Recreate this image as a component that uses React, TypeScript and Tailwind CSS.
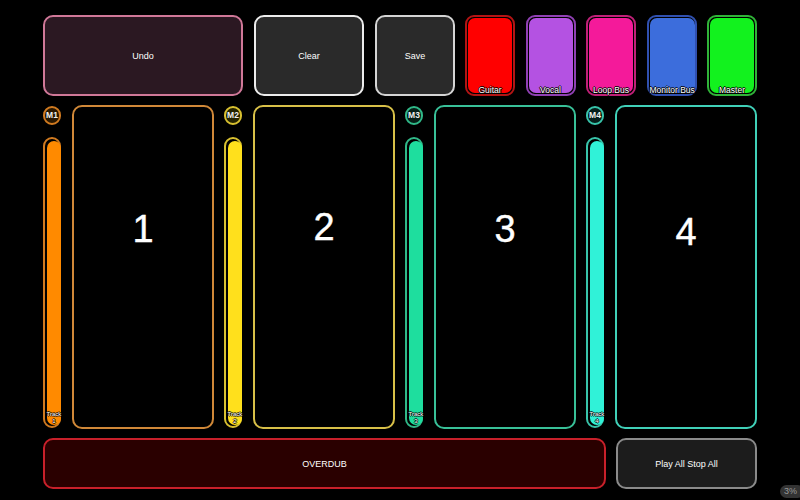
import React from "react";

const font = { fontFamily: '"Liberation Sans", Arial, sans-serif' };

type Track = {
  m: string;
  n: string;
  fill: string;
  faderBorder: string;
  badgeBg: string;
  padBorder: string;
  numPad: string;
};

const tracks: Track[] = [
  { m: "M1", n: "1", fill: "bg-[#ff8a00]", faderBorder: "border-[#d07a20]", badgeBg: "bg-[#2a1800]", padBorder: "border-[#d08838]", numPad: "pt-[102px]" },
  { m: "M2", n: "2", fill: "bg-[#ffe01c]", faderBorder: "border-[#d8c030]", badgeBg: "bg-[#262400]", padBorder: "border-[#d8c048]", numPad: "pt-[100px]" },
  { m: "M3", n: "3", fill: "bg-[#1ede9e]", faderBorder: "border-[#30b888]", badgeBg: "bg-[#061e16]", padBorder: "border-[#38c098]", numPad: "pt-[102px]" },
  { m: "M4", n: "4", fill: "bg-[#30f2d8]", faderBorder: "border-[#38c4aa]", badgeBg: "bg-[#061e1a]", padBorder: "border-[#40d0b8]", numPad: "pt-[105px]" },
];

const buses = [
  { label: "Guitar", fill: "bg-[#ff0000]", border: "border-[#b41414]" },
  { label: "Vocal", fill: "bg-[#b452e2]", border: "border-[#9040b4]" },
  { label: "Loop Bus", fill: "bg-[#f41a9a]", border: "border-[#c02078]" },
  { label: "Monitor Bus", fill: "bg-[#3c6ddc]", border: "border-[#3050b0]" },
  { label: "Master", fill: "bg-[#12f21e]", border: "border-[#30b438]" },
];

const outline = {
  textShadow:
    "-1px 0 0 #000, 1px 0 0 #000, 0 -1px 0 #000, 0 1px 0 #000",
};

function TrackGroup({ t, last }: { t: Track; last: boolean }) {
  return (
    <div className={`flex ${last ? "" : "mr-[10px]"}`}>
      <div className="flex w-[18px] flex-col">
        <div
          className={`mt-[1px] flex h-[19px] w-[18px] items-center justify-center rounded-[9px] border-[2px] ${t.faderBorder} ${t.badgeBg} text-[8.5px] font-bold text-[#f0f0f0]`}
        >
          {t.m}
        </div>
        <div
          className={`mt-[12px] flex h-[291px] w-[18px] rounded-full border-[2px] ${t.faderBorder} bg-black p-[1.5px]`}
        >
          <div className={`relative flex flex-1 flex-col justify-end rounded-full ${t.fill}`}>
            <div className="mb-[0px] flex flex-col items-center text-[6px] leading-[7px] text-white" style={outline}>
              <span>Track</span>
              <span>{t.n}</span>
            </div>
          </div>
        </div>
      </div>
      <div
        className={`ml-[11px] flex h-[324px] w-[142px] justify-center rounded-[10px] border-[2px] ${t.padBorder} bg-black ${t.numPad}`}
      >
        <span className="text-[38px] leading-[40px] text-white" style={{ WebkitTextStroke: "0.4px #fff" }}>
          {t.n}
        </span>
      </div>
    </div>
  );
}

export default function App() {
  return (
    <div className="relative h-[500px] w-[800px] overflow-hidden bg-black" style={font}>
      <div className="flex flex-col px-[43px] pt-[15px]">
        {/* top row */}
        <div className="flex h-[81px]">
          <div className="flex w-[200px] items-center justify-center rounded-[10px] border-[2px] border-[#d07898] bg-[#2b1822] pt-[2px] text-[9px] text-white">
            Undo
          </div>
          <div className="ml-[11px] flex w-[110px] items-center justify-center rounded-[10px] border-[2px] border-[#ececec] bg-[#2a2a2a] pt-[2px] text-[9px] text-white">
            Clear
          </div>
          <div className="ml-[11px] flex w-[80px] items-center justify-center rounded-[10px] border-[2px] border-[#d4d4d4] bg-[#2a2a2a] pt-[2px] text-[9px] text-white">
            Save
          </div>
          <div className="ml-[10px] flex gap-[10.5px]">
            {buses.map((b) => (
              <div key={b.label} className={`flex w-[50px] rounded-[9px] border-[2px] ${b.border} bg-black p-[1px]`}>
                <div className={`flex flex-1 items-end justify-center rounded-[7px] ${b.fill}`}>
                  <span className="mb-[-3px] whitespace-nowrap text-[8.5px] leading-[11px] text-white" style={outline}>
                    {b.label}
                  </span>
                </div>
              </div>
            ))}
          </div>
        </div>

        {/* track row */}
        <div className="mt-[9px] flex">
          {tracks.map((t, i) => (
            <TrackGroup key={t.m} t={t} last={i === tracks.length - 1} />
          ))}
        </div>

        {/* bottom row */}
        <div className="mt-[9px] flex h-[51px]">
          <div className="flex w-[563px] items-center justify-center rounded-[10px] border-[2px] border-[#c8202a] bg-[#2a0000] pt-[2px] text-[9px] text-white">
            OVERDUB
          </div>
          <div className="ml-[10px] flex w-[141px] items-center justify-center rounded-[10px] border-[2px] border-[#8a8a8a] bg-[#1c1c1c] pt-[2px] text-[9px] text-white">
            Play All Stop All
          </div>
        </div>
      </div>

      <div className="absolute bottom-[2px] right-[-4px] flex h-[13px] w-[24px] items-center justify-start rounded-full bg-[#333333] pl-[4px] text-[9px] text-[#9a9a9a]">
        3%
      </div>
    </div>
  );
}
